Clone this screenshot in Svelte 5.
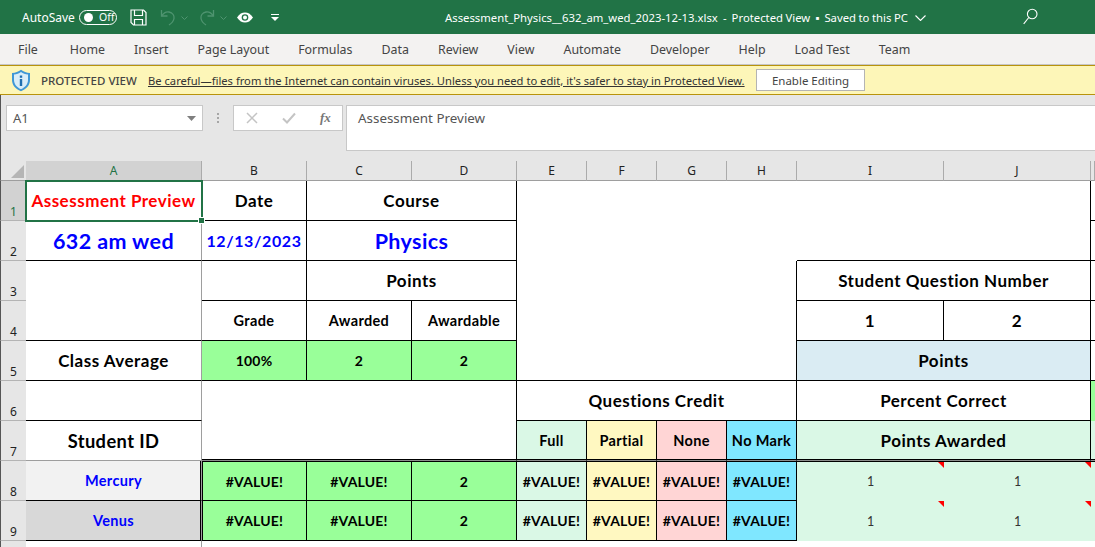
<script>
  const tabs = ['File', 'Home', 'Insert', 'Page Layout', 'Formulas', 'Data', 'Review', 'View', 'Automate', 'Developer', 'Help', 'Load Test', 'Team']
  const columns = ['A', 'B', 'C', 'D', 'E', 'F', 'G', 'H', 'I', 'J', '']
  const rowNumbers = [1, 2, 3, 4, 5, 6, 7, 8, 9]

  // c/r are 1-based sheet positions, cs/rs the merged span
  const cells = [
    { c: 1, r: 1, t: 'Assessment Preview', k: 'f18 red gr bb' },
    { c: 2, r: 1, t: 'Date', k: 'f18 br bb' },
    { c: 3, r: 1, cs: 2, t: 'Course', k: 'f18 br bb' },
    { c: 5, r: 1, cs: 4, rs: 2 },
    { c: 9, r: 1, cs: 2, rs: 2, k: 'bb br' },
    { c: 11, r: 1, k: 'bb' },
    { c: 1, r: 2, t: '632 am wed', k: 'f22 blue gr bb' },
    { c: 2, r: 2, t: '12/13/2023', k: 'f17 blue br bb' },
    { c: 3, r: 2, cs: 2, t: 'Physics', k: 'f22 blue br bb' },
    { c: 11, r: 2, k: 'bb' },
    { c: 1, r: 3, rs: 2, k: 'gr bb' },
    { c: 2, r: 3, k: 'br bb' },
    { c: 3, r: 3, cs: 2, t: 'Points', k: 'f18 br bb' },
    { c: 5, r: 3, cs: 4, rs: 3, k: 'br bb' },
    { c: 9, r: 3, cs: 2, t: 'Student Question Number', k: 'f18 br bb' },
    { c: 11, r: 3, k: 'bb' },
    { c: 2, r: 4, t: 'Grade', k: 'f15 br bb' },
    { c: 3, r: 4, t: 'Awarded', k: 'f15 br bb' },
    { c: 4, r: 4, t: 'Awardable', k: 'f15 br bb' },
    { c: 9, r: 4, t: '1', k: 'f18 br bb' },
    { c: 10, r: 4, t: '2', k: 'f18 br bb' },
    { c: 11, r: 4, k: 'bb' },
    { c: 1, r: 5, t: 'Class Average', k: 'f18 gr bb' },
    { c: 2, r: 5, t: '100%', k: 'f14 lime br bb' },
    { c: 3, r: 5, t: '2', k: 'f14 lime br bb' },
    { c: 4, r: 5, t: '2', k: 'f14 lime br bb' },
    { c: 9, r: 5, cs: 2, t: 'Points', k: 'f18 sky br bb' },
    { c: 11, r: 5, k: 'bb' },
    { c: 1, r: 6, k: 'gr bb' },
    { c: 2, r: 6, cs: 3, rs: 2, k: 'br dbl' },
    { c: 5, r: 6, cs: 4, t: 'Questions Credit', k: 'f18 br bb' },
    { c: 9, r: 6, cs: 2, t: 'Percent Correct', k: 'f18 br bb' },
    { c: 11, r: 6, k: 'lime' },
    { c: 1, r: 7, t: 'Student ID', k: 'f19 gr gb' },
    { c: 5, r: 7, t: 'Full', k: 'f15 mint br dbl' },
    { c: 6, r: 7, t: 'Partial', k: 'f15 butter br dbl' },
    { c: 7, r: 7, t: 'None', k: 'f15 rose br dbl' },
    { c: 8, r: 7, t: 'No Mark', k: 'f15 cyan br dbl' },
    { c: 9, r: 7, cs: 2, t: 'Points Awarded', k: 'f18 mint br dbl' },
    { c: 11, r: 7, k: 'mint dbl' }
  ]

  const students = [
    { r: 8, name: 'Mercury', k: 'shade1' },
    { r: 9, name: 'Venus', k: 'shade2' }
  ]
  const credit = ['mint', 'butter', 'rose', 'cyan']

  for (const s of students) {
    const top = s.r === 8 ? ' dt' : ''
    cells.push({ c: 1, r: s.r, t: s.name, k: `f15 blue gr bb inner ${s.k}` })
    cells.push({ c: 2, r: s.r, t: '#VALUE!', k: `f14 lime br bb dl${top}` })
    cells.push({ c: 3, r: s.r, t: '#VALUE!', k: `f14 lime br bb${top}` })
    cells.push({ c: 4, r: s.r, t: '2', k: `f14 lime br bb${top}` })
    credit.forEach((k, i) => {
      cells.push({ c: 5 + i, r: s.r, t: '#VALUE!', k: `f14 ${k} br bb${top}` })
    })
    cells.push({ c: 9, r: s.r, t: '1', k: `plain mint note${top}` })
    cells.push({ c: 10, r: s.r, t: '1', k: `plain mint note${top}` })
    cells.push({ c: 11, r: s.r, k: `mint${top}` })
  }
  cells.push({ c: 1, r: 10, k: 'gr' })

  const area = (x) => `grid-area: ${x.r + 1} / ${x.c + 1} / span ${x.rs || 1} / span ${x.cs || 1}`
</script>

<div class="window">
  <header class="titlebar">
    <span class="autosave">AutoSave</span>
    <span class="toggle"><i></i><b>Off</b></span>
    <svg class="qat save" width="17" height="17" viewBox="0 0 17 17" fill="none" stroke="#fff" stroke-width="1.2">
      <path d="M1 1h12.5l2.5 2.5V16H3.5L1 13.5z" />
      <path d="M4.5 1v5.5h8V1M4.5 16v-5.5h8V16" />
    </svg>
    <svg class="qat undo" width="16" height="17" viewBox="0 0 16 17" fill="none" stroke="#4f9470" stroke-width="1.3">
      <path d="M1.5 1v6h6" />
      <path d="M1.5 7C4 3.500 6.500 2.500 9 3c3.500.8 5.500 3.500 5 6.500-.4 2.500-2 4.500-5 6.500" />
    </svg>
    <svg class="mini" width="7" height="4" viewBox="0 0 7 4" fill="none" stroke="#4f9470"><path d="M.5.5l3 3 3-3" /></svg>
    <svg class="qat redo" width="16" height="17" viewBox="0 0 16 17" fill="none" stroke="#4f9470" stroke-width="1.3">
      <path d="M14.500 1v6h-6" />
      <path d="M14.500 7C12 3.500 9.500 2.500 7 3c-3.500.8-5.500 3.500-5 6.500.4 2.500 2 4.500 5 6.500" />
    </svg>
    <svg class="mini" width="7" height="4" viewBox="0 0 7 4" fill="none" stroke="#4f9470"><path d="M.5.5l3 3 3-3" /></svg>
    <svg class="qat eye" width="16" height="11" viewBox="0 0 16 11">
      <path d="M0 5.500C2.500 1.800 5 .5 8 .5s5.500 1.300 8 5c-2.500 3.700-5 5-8 5s-5.500-1.300-8-5z" fill="#fff" />
      <circle cx="8" cy="5.500" r="3.300" fill="#217346" />
      <circle cx="8" cy="5.500" r="2" fill="#fff" />
    </svg>
    <svg class="qat custom" width="8" height="7" viewBox="0 0 8 7" fill="#fff">
      <rect x="0" y="0" width="8" height="1" />
      <path d="M0 3h8L4 7z" />
    </svg>
    <span class="doc">Assessment_Physics__632_am_wed_2023-12-13.xlsx&nbsp; - &nbsp;Protected View &nbsp;▪&nbsp; Saved to this PC</span>
    <svg class="chev" width="11" height="6" viewBox="0 0 11 6" fill="none" stroke="#fff" stroke-width="1.1"><path d="M.5.5l5 5 5-5" /></svg>
    <svg class="search" width="15" height="17" viewBox="0 0 15 17" fill="none" stroke="#fff" stroke-width="1.1">
      <circle cx="9.200" cy="6" r="4.800" />
      <path d="M5.800 9.500L.7 15.800" />
    </svg>
  </header>

  <nav class="tabs">
    {#each tabs as tab}
      <span>{tab}</span>
    {/each}
  </nav>

  <div class="protected">
    <svg class="shield" width="20" height="23" viewBox="0 0 20 23">
      <path d="M10 .8c2.500 2 5.500 3 9 3.200v7c0 5-3.500 9-9 11.200C4.500 20 1 16 1 11V4c3.500-.2 6.500-1.200 9-3.200z" fill="#3f97d6" />
      <path d="M10 3c2 1.400 4.300 2.200 7 2.500V11c0 4-2.800 7.300-7 9.200C5.800 18.300 3 15 3 11V5.500C5.700 5.200 8 4.400 10 3z" fill="#d9edf9" />
      <rect x="8.800" y="6.500" width="2.400" height="2.300" fill="#1f6fb0" />
      <rect x="8.800" y="10" width="2.400" height="7" fill="#1f6fb0" />
    </svg>
    <strong>PROTECTED VIEW</strong>
    <u>Be careful—files from the Internet can contain viruses. Unless you need to edit, it's safer to stay in Protected View.</u>
    <button type="button">Enable Editing</button>
  </div>

  <div class="formula">
    <div class="namebox">
      <span>A1</span>
      <svg width="9" height="5" viewBox="0 0 9 5" fill="#7f7f7f"><path d="M0 0h9L4.500 5z" /></svg>
    </div>
    <div class="dots"><i></i><i></i><i></i></div>
    <div class="fxbox">
      <svg width="12" height="12" viewBox="0 0 12 12" fill="none" stroke="#c4c4c4" stroke-width="1.500"><path d="M1 1l10 10M11 1L1 11" /></svg>
      <svg width="14" height="12" viewBox="0 0 14 12" fill="none" stroke="#c4c4c4" stroke-width="2"><path d="M1 6.500l4 4L13 1.500" /></svg>
      <em>fx</em>
    </div>
    <div class="input">Assessment Preview</div>
  </div>

  <div class="sheet">
    <div class="corner"><svg width="13" height="13" viewBox="0 0 13 13" fill="#b5b5b5"><path d="M13 0v13H0z" /></svg></div>
    {#each columns as col, i}
      <div class="colhead" class:active={col === 'A'} style={`grid-area: 1 / ${i + 2}`}>{col}</div>
    {/each}
    {#each rowNumbers as n}
      <div class="rowhead" class:active={n === 1} style={`grid-area: ${n + 1} / 1`}>{n}</div>
    {/each}
    <div class="rowhead tail"></div>
    {#each cells as cell}
      <div class="cell {cell.k || ''}" style={area(cell)}>{cell.t || ''}</div>
    {/each}
    <div class="selection"><i></i></div>
  </div>
</div>

<style>
  :global(body) {
    margin: 0;
    overflow: hidden;
  }

  .window {
    height: 547px;
    width: 1095px;
    overflow: hidden;
    display: flex;
    flex-direction: column;
    font-family: 'Noto Sans', 'Open Sans', sans-serif;
    background: #fff;
    position: relative;
  }

  .titlebar {
    height: 34px;
    flex: none;
    background: #217346;
    color: #fff;
    display: flex;
    align-items: center;
    font-size: 12px;
  }

  .autosave {
    margin-left: 22px;
    width: 57px;
  }

  .toggle {
    width: 38px;
    height: 15px;
    box-sizing: border-box;
    border: 1px solid #fff;
    border-radius: 8px;
    display: flex;
    align-items: center;
    font-size: 10.500px;
  }

  .toggle i {
    width: 9px;
    height: 9px;
    border-radius: 50%;
    background: #fff;
    margin-left: 4px;
  }

  .toggle b {
    font-weight: 400;
    margin-left: 6px;
  }

  .qat {
    flex: none;
  }

  .save { margin-left: 13px; }
  .undo { margin-left: 13px; }
  .mini { margin-left: 5px; margin-top: 1px; }
  .redo { margin-left: 11px; }
  .eye { margin-left: 10px; }
  .custom { margin-left: 18px; }

  .doc {
    position: absolute;
    left: 445px;
    top: 9px;
    white-space: nowrap;
    font-size: 11.300px;
    line-height: 17px;
    word-spacing: -0.4px;
  }

  .chev {
    position: absolute;
    left: 915px;
    top: 15px;
  }

  .search {
    position: absolute;
    left: 1023px;
    top: 8px;
  }

  .tabs {
    height: 31px;
    flex: none;
    box-sizing: border-box;
    background: #f3f2f1;
    border-bottom: 1px solid #c6c6c6;
    display: flex;
    align-items: center;
    gap: 29px;
    padding-left: 18px;
    font-size: 12.400px;
    color: #444;
  }

  .tabs span:first-child {
    margin-right: 3px;
  }

  .protected {
    height: 30px;
    flex: none;
    box-sizing: border-box;
    background: #fdf6b8;
    border-top: 1px solid #b8930c;
    border-bottom: 1px solid #b8930c;
    display: flex;
    align-items: center;
    font-size: 11.500px;
    color: #333;
    padding-left: 11px;
    white-space: nowrap;
  }

  .protected strong {
    font-weight: 500;
    margin-left: 10px;
    width: 107px;
    color: #444;
  }

  .protected u {
    font-size: 11.200px;
    width: 608px;
  }

  .protected button {
    width: 109px;
    height: 22px;
    box-sizing: border-box;
    background: #fff;
    border: 1px solid #b4b4b4;
    font: inherit;
    color: #444;
    padding: 0;
  }

  .formula {
    flex: none;
    height: 66px;
    box-sizing: border-box;
    background: #e6e6e6;
    border-left: 1px solid #555;
    padding: 10px 0 0 5px;
    display: flex;
    align-items: flex-start;
  }

  .namebox {
    width: 197px;
    height: 26px;
    box-sizing: border-box;
    background: #fff;
    border: 1px solid #c8c8c8;
    display: flex;
    align-items: center;
    justify-content: space-between;
    padding: 0 6px;
    font-size: 13px;
    color: #555;
  }

  .dots {
    width: 30px;
    height: 26px;
    display: flex;
    flex-direction: column;
    align-items: center;
    justify-content: center;
    gap: 2px;
  }

  .dots i {
    width: 2px;
    height: 2px;
    background: #a6a6a6;
  }

  .fxbox {
    width: 110px;
    height: 26px;
    box-sizing: border-box;
    background: #fff;
    border: 1px solid #c8c8c8;
    display: flex;
    align-items: center;
    gap: 24px;
    padding-left: 12px;
  }

  .fxbox em {
    font-family: 'Liberation Serif', serif;
    font-size: 13px;
    font-weight: 700;
    color: #777;
  }

  .input {
    margin-left: 3px;
    flex: 1;
    height: 46px;
    box-sizing: border-box;
    background: #fff;
    border: 1px solid #c8c8c8;
    border-right: 0;
    padding: 3px 11px;
    font-size: 13.400px;
    line-height: 18px;
    color: #555;
  }

  .sheet {
    flex: 1;
    display: grid;
    grid-template-columns: 26px 176px 105px 105px 105px 70px 70px 70px 70px 147px 147px 4px;
    grid-template-rows: 20px repeat(10, 40px);
    background: #fff;
    position: relative;
    overflow: hidden;
    font-family: Lato, sans-serif;
  }

  .corner {
    grid-area: 1 / 1;
    background: #e6e6e6;
    border-left: 1px solid #555;
    border-bottom: 1px solid #9e9e9e;
    box-sizing: border-box;
    display: flex;
    align-items: flex-end;
    justify-content: flex-end;
    padding: 0 2px 2px 0;
  }

  .colhead {
    background: #e6e6e6;
    border-right: 1px solid #ababab;
    border-bottom: 1px solid #9e9e9e;
    box-sizing: border-box;
    font-family: 'Noto Sans', sans-serif;
    font-size: 12px;
    line-height: 20px;
    text-align: center;
    color: #222;
  }

  .rowhead {
    background: #e6e6e6;
    border-left: 1px solid #555;
    border-bottom: 1px solid #b4b4b4;
    box-sizing: border-box;
    font-family: 'Noto Sans', sans-serif;
    font-size: 12px;
    line-height: 17px;
    display: flex;
    align-items: flex-end;
    justify-content: center;
    color: #222;
  }

  .rowhead.tail {
    grid-area: 11 / 1;
  }

  .colhead.active,
  .rowhead.active {
    background: #d2d2d2;
    color: #217346;
  }

  .cell {
    box-sizing: border-box;
    display: flex;
    align-items: center;
    justify-content: center;
    font-weight: 700;
    color: #000;
    white-space: nowrap;
    position: relative;
  }

  .f14 { font-size: 14px; letter-spacing: 0.2px; }
  .f15 { font-size: 14.500px; letter-spacing: 0.35px; }
  .f17 { font-size: 16px; letter-spacing: 0.6px; }
  .f18 { font-size: 17px; letter-spacing: 0.5px; }
  .f19 { font-size: 18.300px; letter-spacing: 0.4px; }
  .f22 { font-size: 21.500px; letter-spacing: 0.4px; }
  .plain { font-size: 12.500px; font-weight: 400; color: #333; }

  .red { color: #f00; }
  .blue { color: #00f; }
  .lime { background: #99ff99; }
  .sky { background: #daecf3; }
  .mint { background: #daf8e6; }
  .butter { background: #fff8c1; }
  .rose { background: #ffd5d5; }
  .cyan { background: #7fe7ff; }
  .shade1 { background: #f2f2f2; }
  .shade2 { background: #d8d8d8; }

  .br { border-right: 1px solid #000; }
  .bb { border-bottom: 1px solid #000; }
  .gr { border-right: 1px solid #9e9e9e; }
  .gb { border-bottom: 1px solid #9e9e9e; }
  .dbl { border-bottom: 1px solid #8c8c8c; box-shadow: inset 0 -1px #000; }
  .dt { border-top: 1px solid #000; }
  .dl { border-left: 1px solid #000; }
  .inner { box-shadow: inset -1px 0 #000; }

  .note::after {
    content: '';
    position: absolute;
    top: 0;
    right: 0;
    border-top: 6px solid #f00;
    border-left: 6px solid transparent;
  }

  .selection {
    grid-area: 2 / 2;
    margin: -1px;
    border: 2px solid #217346;
    position: relative;
    pointer-events: none;
  }

  .selection i {
    position: absolute;
    right: -4px;
    bottom: -4px;
    width: 5px;
    height: 5px;
    background: #217346;
    border: 1px solid #fff;
  }
</style>
